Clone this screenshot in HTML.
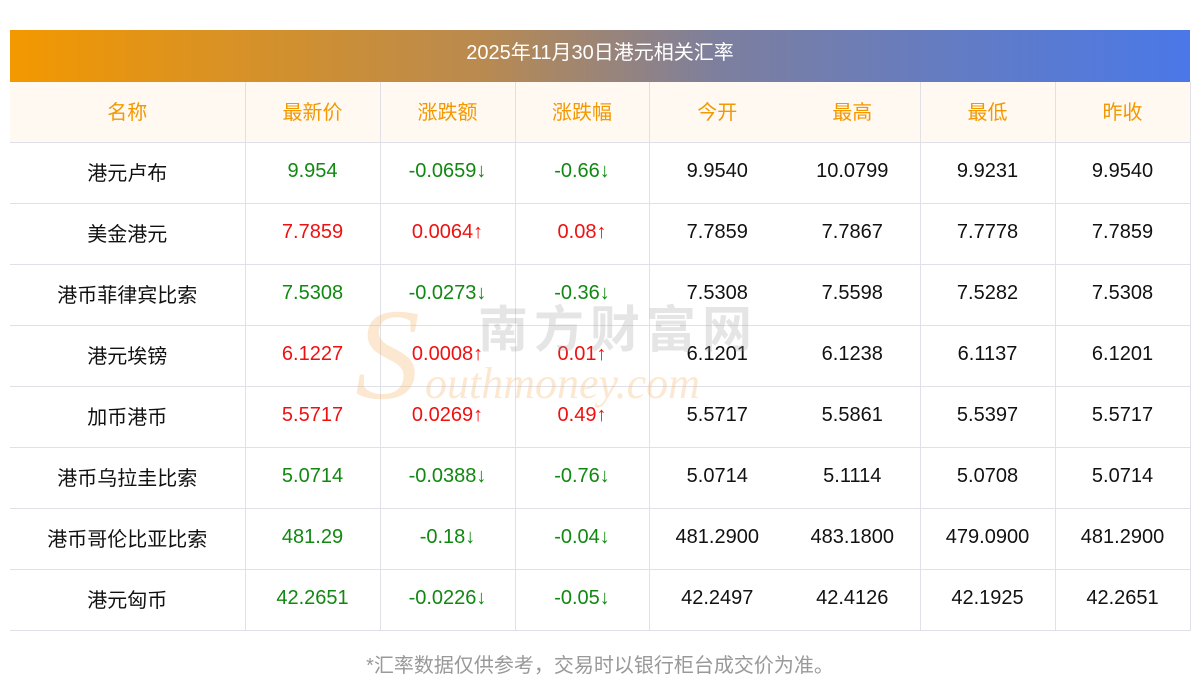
<!DOCTYPE html>
<html><head><meta charset="utf-8"><style>
body{margin:0;background:#fff;width:1200px;height:697px;overflow:hidden;position:relative;font-family:"Liberation Sans","Noto Sans CJK SC",sans-serif;}
.hd{position:absolute;left:10px;top:30px;width:1180px;height:52px;background:linear-gradient(90deg,#f39800,#b98a50 40%,#7d7f9e 60%,#4a78e8);color:#fff;font-size:20px;line-height:46px;text-align:center;}
table{position:absolute;left:10px;top:82px;border-collapse:collapse;table-layout:fixed;width:1180px;}
td{height:61px;border-bottom:1px solid #dfe0e8;text-align:center;font-size:20px;color:#111;padding:0 0 3px 0;box-sizing:border-box;}
tr.h td{background:#fff9f2;color:#f39800;height:60px;}
td.b{border-right:1px solid #dfe0e8;}
.g{color:#118811}.r{color:#ee1111}
.wm1{position:absolute;left:478px;top:290px;font-size:50px;color:rgba(150,150,150,.25);letter-spacing:6px;font-weight:bold;}
.wm2{position:absolute;left:425px;top:358px;font-size:44px;color:rgba(245,180,100,.3);font-style:italic;font-family:"Liberation Serif",serif;}
.wm3{position:absolute;left:355px;top:290px;font-size:130px;color:rgba(245,180,100,.3);font-style:italic;font-family:"Liberation Serif",serif;line-height:1}
.ft{position:absolute;left:0;width:1200px;top:649px;text-align:center;color:#999;font-size:20px;}
</style></head><body>
<div class="hd">2025年11月30日港元相关汇率</div>
<table>
<colgroup><col style="width:235px"><col style="width:135px"><col style="width:135px"><col style="width:134px"><col style="width:136px"><col style="width:135px"><col style="width:135px"><col style="width:135px"></colgroup>
<tr class="h"><td class="b">名称</td><td class="b">最新价</td><td class="b">涨跌额</td><td class="b">涨跌幅</td><td>今开</td><td class="b">最高</td><td class="b">最低</td><td class="b">昨收</td></tr>
<tr><td class="b">港元卢布</td><td class="b g">9.954</td><td class="b g">-0.0659↓</td><td class="b g">-0.66↓</td><td>9.9540</td><td class="b">10.0799</td><td class="b">9.9231</td><td class="b">9.9540</td></tr>
<tr><td class="b">美金港元</td><td class="b r">7.7859</td><td class="b r">0.0064↑</td><td class="b r">0.08↑</td><td>7.7859</td><td class="b">7.7867</td><td class="b">7.7778</td><td class="b">7.7859</td></tr>
<tr><td class="b">港币菲律宾比索</td><td class="b g">7.5308</td><td class="b g">-0.0273↓</td><td class="b g">-0.36↓</td><td>7.5308</td><td class="b">7.5598</td><td class="b">7.5282</td><td class="b">7.5308</td></tr>
<tr><td class="b">港元埃镑</td><td class="b r">6.1227</td><td class="b r">0.0008↑</td><td class="b r">0.01↑</td><td>6.1201</td><td class="b">6.1238</td><td class="b">6.1137</td><td class="b">6.1201</td></tr>
<tr><td class="b">加币港币</td><td class="b r">5.5717</td><td class="b r">0.0269↑</td><td class="b r">0.49↑</td><td>5.5717</td><td class="b">5.5861</td><td class="b">5.5397</td><td class="b">5.5717</td></tr>
<tr><td class="b">港币乌拉圭比索</td><td class="b g">5.0714</td><td class="b g">-0.0388↓</td><td class="b g">-0.76↓</td><td>5.0714</td><td class="b">5.1114</td><td class="b">5.0708</td><td class="b">5.0714</td></tr>
<tr><td class="b">港币哥伦比亚比索</td><td class="b g">481.29</td><td class="b g">-0.18↓</td><td class="b g">-0.04↓</td><td>481.2900</td><td class="b">483.1800</td><td class="b">479.0900</td><td class="b">481.2900</td></tr>
<tr><td class="b">港元匈币</td><td class="b g">42.2651</td><td class="b g">-0.0226↓</td><td class="b g">-0.05↓</td><td>42.2497</td><td class="b">42.4126</td><td class="b">42.1925</td><td class="b">42.2651</td></tr>
</table>
<div class="wm3">S</div>
<div class="wm1">南方财富网</div>
<div class="wm2">outhmoney.com</div>
<div class="ft">*汇率数据仅供参考，交易时以银行柜台成交价为准。</div>
</body></html>
